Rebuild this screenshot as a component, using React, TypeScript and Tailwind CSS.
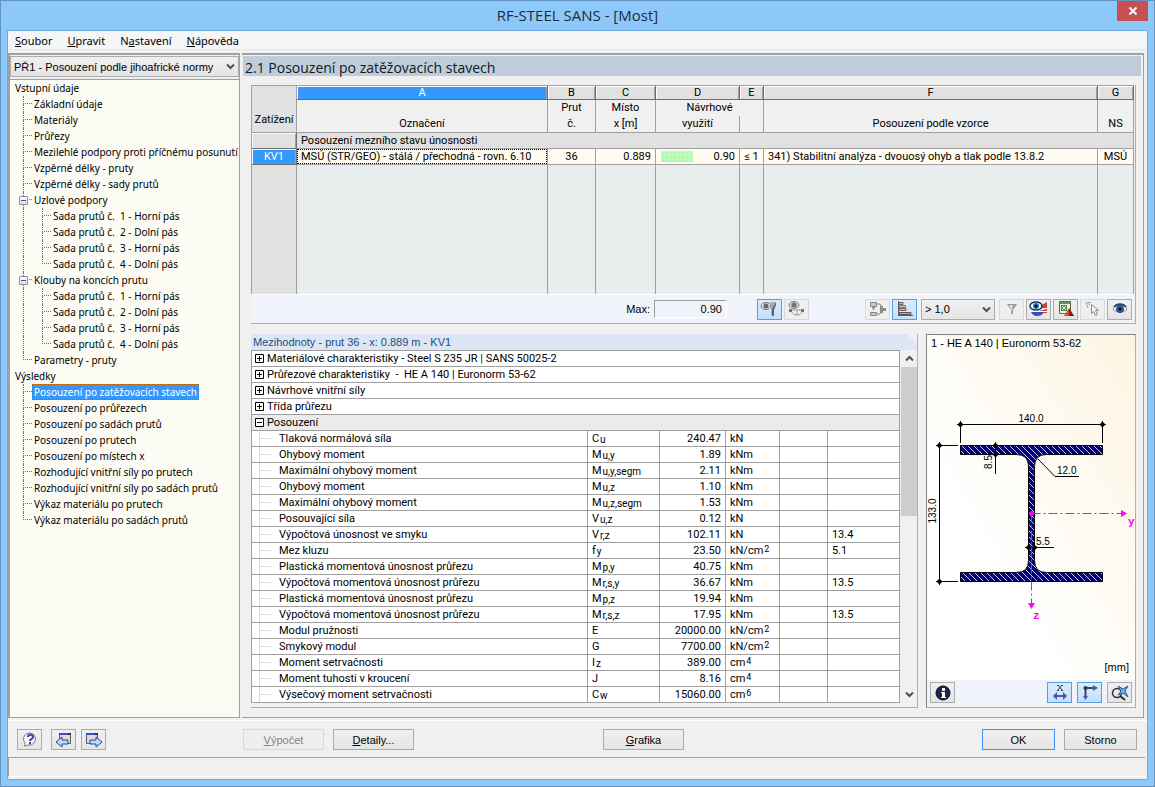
import { useState } from "react";
import type { ReactNode } from "react";
import clsx from "clsx";

type TreeNode = {
  id: string;
  label: string;
  children?: TreeNode[];
};

const members = (prefix: string): TreeNode[] => [
  { id: prefix + "1", label: "Sada prutů č.  1 - Horní pás" },
  { id: prefix + "2", label: "Sada prutů č.  2 - Dolní pás" },
  { id: prefix + "3", label: "Sada prutů č.  3 - Horní pás" },
  { id: prefix + "4", label: "Sada prutů č.  4 - Dolní pás" },
];

const tree: TreeNode[] = [
  {
    id: "input",
    label: "Vstupní údaje",
    children: [
      { id: "general", label: "Základní údaje" },
      { id: "materials", label: "Materiály" },
      { id: "sections", label: "Průřezy" },
      { id: "lateral", label: "Mezilehlé podpory proti příčnému posunutí" },
      { id: "lengths", label: "Vzpěrné délky - pruty" },
      { id: "lengthSets", label: "Vzpěrné délky - sady prutů" },
      { id: "supports", label: "Uzlové podpory", children: members("s") },
      { id: "hinges", label: "Klouby na koncích prutu", children: members("h") },
      { id: "params", label: "Parametry - pruty" },
    ],
  },
  {
    id: "results",
    label: "Výsledky",
    children: [
      { id: "byCase", label: "Posouzení po zatěžovacích stavech" },
      { id: "bySection", label: "Posouzení po průřezech" },
      { id: "bySet", label: "Posouzení po sadách prutů" },
      { id: "byMember", label: "Posouzení po prutech" },
      { id: "byX", label: "Posouzení po místech x" },
      { id: "forces", label: "Rozhodující vnitřní síly po prutech" },
      { id: "forceSets", label: "Rozhodující vnitřní síly po sadách prutů" },
      { id: "parts", label: "Výkaz materiálu po prutech" },
      { id: "partSets", label: "Výkaz materiálu po sadách prutů" },
    ],
  },
];

type Detail = {
  name: string;
  symbol: string;
  sub?: string;
  value: string;
  unit: string;
  power?: string;
  ref?: string;
};

const details: Detail[] = [
  { name: "Tlaková normálová síla", symbol: "C", sub: "u", value: "240.47", unit: "kN" },
  { name: "Ohybový moment", symbol: "M", sub: "u,y", value: "1.89", unit: "kNm" },
  { name: "Maximální ohybový moment", symbol: "M", sub: "u,y,segm", value: "2.11", unit: "kNm" },
  { name: "Ohybový moment", symbol: "M", sub: "u,z", value: "1.10", unit: "kNm" },
  { name: "Maximální ohybový moment", symbol: "M", sub: "u,z,segm", value: "1.53", unit: "kNm" },
  { name: "Posouvající síla", symbol: "V", sub: "u,z", value: "0.12", unit: "kN" },
  { name: "Výpočtová únosnost ve smyku", symbol: "V", sub: "r,z", value: "102.11", unit: "kN", ref: "13.4" },
  { name: "Mez kluzu", symbol: "f", sub: "y", value: "23.50", unit: "kN/cm", power: "2", ref: "5.1" },
  { name: "Plastická momentová únosnost průřezu", symbol: "M", sub: "p,y", value: "40.75", unit: "kNm" },
  { name: "Výpočtová momentová únosnost průřezu", symbol: "M", sub: "r,s,y", value: "36.67", unit: "kNm", ref: "13.5" },
  { name: "Plastická momentová únosnost průřezu", symbol: "M", sub: "p,z", value: "19.94", unit: "kNm" },
  { name: "Výpočtová momentová únosnost průřezu", symbol: "M", sub: "r,s,z", value: "17.95", unit: "kNm", ref: "13.5" },
  { name: "Modul pružnosti", symbol: "E", value: "20000.00", unit: "kN/cm", power: "2" },
  { name: "Smykový modul", symbol: "G", value: "7700.00", unit: "kN/cm", power: "2" },
  { name: "Moment setrvačnosti", symbol: "I", sub: "z", value: "389.00", unit: "cm", power: "4" },
  { name: "Moment tuhosti v kroucení", symbol: "J", value: "8.16", unit: "cm", power: "4" },
  { name: "Výsečový moment setrvačnosti", symbol: "C", sub: "w", value: "15060.00", unit: "cm", power: "6" },
];

const groups = [
  "Materiálové charakteristiky - Steel S 235 JR | SANS 50025-2",
  "Průřezové charakteristiky  -  HE A 140 | Euronorm 53-62",
  "Návrhové vnitřní síly",
  "Třída průřezu",
];

const menu = [
  ["", "S", "oubor"],
  ["", "U", "pravit"],
  ["N", "a", "stavení"],
  ["", "N", "ápověda"],
];

// ---- Small controls ----

function Chevron({ up = false }: { up?: boolean }) {
  return (
    <svg width="9" height="7" viewBox="0 0 9 7" fill="none" stroke="#505050" strokeWidth="2">
      <path d={up ? "M1 5.5 4.5 2 8 5.5" : "M1 1.5 4.5 5 8 1.5"} />
    </svg>
  );
}

type SelectProps = {
  label: string;
  options: string[];
  className: string;
};

function Select({ label, options, className }: SelectProps) {
  return (
    <div className={clsx("relative", className)}>
      <select
        aria-label={label}
        className="h-full w-full appearance-none border border-[#acacac] bg-linear-to-b from-[#f0f0f0] to-[#e5e5e5] pl-[3px] pr-5"
      >
        {options.map((o) => (
          <option key={o}>{o}</option>
        ))}
      </select>
      <span className="pointer-events-none absolute inset-y-0 right-1 flex items-center">
        <Chevron />
      </span>
    </div>
  );
}

type IconButtonProps = {
  label: string;
  active?: boolean;
  disabled?: boolean;
  children: ReactNode;
};

function IconButton({ label, active, disabled, children }: IconButtonProps) {
  return (
    <button
      aria-label={label}
      title={label}
      disabled={disabled}
      className={clsx(
        "flex h-[21px] w-[25px] shrink-0 items-center justify-center border",
        active
          ? "border-[#569de5] bg-linear-to-b from-[#daecfc] to-[#c4e0fc]"
          : disabled
            ? "border-[#d9d9d9] bg-[#efefef]"
            : "border-[#acacac] bg-linear-to-b from-[#f0f0f0] to-[#e5e5e5]",
      )}
    >
      <svg width="20" height="18" viewBox="0 0 20 18" fill="none">
        {children}
      </svg>
    </button>
  );
}

type PushButtonProps = {
  mnemonic: string;
  rest: string;
  className: string;
  disabled?: boolean;
};

function PushButton({ mnemonic, rest, className, disabled }: PushButtonProps) {
  return (
    <button
      disabled={disabled}
      className={clsx(
        "h-[21px] border",
        disabled
          ? "border-[#d9d9d9] bg-[#efefef] text-[#838383]"
          : "bg-linear-to-b from-[#f0f0f0] to-[#e5e5e5]",
        className,
      )}
    >
      <u>{mnemonic}</u>
      {rest}
    </button>
  );
}

// ---- Navigation tree ----

function Branch({ last }: { last: boolean }) {
  return (
    <span className="block h-4 w-[9px] shrink-0">
      <span className="block h-2 border-b border-l border-dotted border-[#707070]" />
      {!last && <span className="block h-2 border-l border-dotted border-[#707070]" />}
    </span>
  );
}

function Navigator() {
  const [selected, setSelected] = useState("byCase");
  const [closed, setClosed] = useState<string[]>([]);

  const toggle = (id: string) => {
    setClosed((prev) =>
      prev.includes(id) ? prev.filter((c) => c !== id) : [...prev, id],
    );
  };

  const renderLabel = (node: TreeNode) => (
    <button
      className={clsx(
        "h-4 whitespace-pre border border-dotted px-px leading-[14px]",
        selected === node.id
          ? "border-[#c06000] bg-[#3399ff] text-white"
          : "border-transparent",
      )}
      onClick={() => setSelected(node.id)}
    >
      {node.label}
    </button>
  );

  return (
    <nav className="grow border-t border-[#a0a0a0] bg-[#fcfbf3] font-['Noto_Sans',sans-serif] text-[10px]">
      <ul>
        {tree.map((root) => (
          <li key={root.id}>
            <div className="flex h-4 pl-[3px]">{renderLabel(root)}</div>
            <ul>
              {root.children?.map((node, i, all) => {
                const last = i === all.length - 1;
                const open = !closed.includes(node.id);

                return (
                  <li key={node.id}>
                    <div className="relative flex h-4 pl-[13px]">
                      <Branch last={last} />
                      {node.children && (
                        <button
                          aria-label={node.label}
                          aria-expanded={open}
                          className="absolute left-[9px] top-1 flex h-[9px] w-[9px] items-center justify-center rounded-[1px] border border-[#919191] bg-linear-to-b from-white to-[#dcdcdc]"
                          onClick={() => toggle(node.id)}
                        >
                          <span className="h-px w-[5px] bg-[#3c4cb0]" />
                        </button>
                      )}
                      {renderLabel(node)}
                    </div>
                    {node.children && open && (
                      <ul>
                        {node.children.map((leaf, j, leaves) => (
                          <li key={leaf.id} className="flex h-4 pl-[13px]">
                            <span className="w-[19px] shrink-0 border-l border-dotted border-[#707070]" />
                            <Branch last={j === leaves.length - 1} />
                            {renderLabel(leaf)}
                          </li>
                        ))}
                      </ul>
                    )}
                  </li>
                );
              })}
            </ul>
          </li>
        ))}
      </ul>
    </nav>
  );
}

// ---- Design results ----

function ResultsTable() {
  const cell = "border-b border-r border-[#a0a0a0]";
  const letter =
    "border-b border-r border-[#6e6e6e] font-normal shadow-[inset_1px_1px_0_#ffffff,inset_-1px_0_0_#a0a0a0]";

  return (
    <table className="w-full table-fixed border-separate border-spacing-0 border-l border-t border-[#a0a0a0] font-['Roboto',sans-serif] leading-[13px]">
      <colgroup>
        <col className="w-[45px]" />
        <col className="w-[251px]" />
        <col className="w-[48px]" />
        <col className="w-[60px]" />
        <col className="w-[84px]" />
        <col className="w-[24px]" />
        <col />
        <col className="w-[36px]" />
      </colgroup>
      <thead>
        <tr className="h-[14px]">
          <th
            rowSpan={2}
            className={clsx(cell, "bg-[#e1e1e1] pb-[6px] align-bottom font-normal")}
          >
            Zatížení
          </th>
          {["A", "B", "C", "D", "E", "F", "G"].map((l) => (
            <th
              key={l}
              className={clsx(letter, l === "A" ? "bg-[#3399ff] text-white" : "bg-[#e1e1e1]")}
            >
              {l}
            </th>
          ))}
        </tr>
        <tr className="h-[33px] bg-[#f0f0f0] leading-4">
          <th className={clsx(cell, "align-bottom font-normal")}>Označení</th>
          <th className={clsx(cell, "font-normal")}>
            Prut
            <br />
            č.
          </th>
          <th className={clsx(cell, "font-normal")}>
            Místo
            <br />x [m]
          </th>
          <th colSpan={2} className={clsx(cell, "font-normal")}>
            <div>Návrhové</div>
            <div className="flex">
              <span className="w-[84px] border-r border-[#a0a0a0]">využití</span>
            </div>
          </th>
          <th className={clsx(cell, "align-bottom font-normal")}>Posouzení podle vzorce</th>
          <th className={clsx(cell, "align-bottom font-normal")}>NS</th>
        </tr>
      </thead>
      <tbody>
        <tr className="h-4">
          <td className={clsx(letter, "bg-[#e1e1e1]")} />
          <td colSpan={7} className={clsx(cell, "bg-[#e1e1e1] pl-1")}>
            Posouzení mezního stavu únosnosti
          </td>
        </tr>
        <tr className="h-4 bg-[#fffbf0]">
          <td className={clsx(letter, "bg-[#3399ff] text-center text-white")}>KV1</td>
          <td className={cell}>
            <div className="h-[15px] whitespace-nowrap border border-dotted border-black pl-[3px]">
              MSÚ (STR/GEO) - stálá / přechodná - rovn. 6.10
            </div>
          </td>
          <td className={clsx(cell, "text-center")}>36</td>
          <td className={clsx(cell, "pr-1 text-right")}>0.889</td>
          <td className={clsx(cell, "pl-[5px] pr-1")}>
            <div className="flex items-center justify-between">
              <span className="h-[11px] w-8 bg-[#bbffb5] bg-[radial-gradient(#b2f2bc_1px,transparent_1px)] bg-[size:4px_4px]" />
              0.90
            </div>
          </td>
          <td className={clsx(cell, "text-center")}>≤ 1</td>
          <td className={clsx(cell, "whitespace-nowrap pl-1")}>
            341) Stabilitní analýza - dvouosý ohyb a tlak podle 13.8.2
          </td>
          <td className={clsx(cell, "text-center")}>MSÚ</td>
        </tr>
        <tr className="h-[129px] bg-[#e8eeee]">
          <td className="border-r border-[#a0a0a0] bg-[#e1e1e1]" />
          {[1, 2, 3, 4, 5, 6, 7].map((c) => (
            <td key={c} className="border-r border-[#a0a0a0]" />
          ))}
        </tr>
      </tbody>
    </table>
  );
}

function ResultsToolbar() {
  return (
    <div className="flex h-[29px] items-center justify-end gap-[2px] border-t border-white bg-[#f0f4fa] pr-[2px]">
      <label htmlFor="max" className="mr-[2px]">
        Max:
      </label>
      <input
        id="max"
        readOnly
        value="0.90"
        className="mr-[28px] h-[18px] w-[73px] border border-b-white border-l-[#a0a0a0] border-r-white border-t-[#a0a0a0] bg-[#f0f4fa] pr-1 text-right"
      />
      <IconButton label="Barevné škály" active>
        <path d="M10 2h6l-3 8v5h-2V9z" fill="#a5adb2" />
        <path d="M12 16V9l4-7v3l-2 5v6z" fill="#5f6468" />
        <ellipse cx="6" cy="6" rx="5" ry="3.500" fill="#d4d7da" stroke="#7b7f83" />
        <circle cx="6" cy="6" r="2.500" fill="#66696c" />
      </IconButton>
      <IconButton label="Průběhy výsledků" disabled>
        <ellipse cx="7" cy="5" rx="5" ry="3.500" fill="#cfcfcf" stroke="#858585" />
        <circle cx="7" cy="5" r="2.500" fill="#747474" />
        <path d="M3 10h14M4 11c2 3 3 4 6 4s4-1 6-4M10 10v5" stroke="#9a9a9a" />
        <path d="M2 9h3v3H2zM14 9h3v3h-3z" fill="#6f7868" />
      </IconButton>
      <span className="w-[52px]" />
      <IconButton label="Vazby" disabled>
        <path d="M2.500 2.500h6v4h-6zM2.500 12.500h6v3h-6z" fill="#c9c9c9" stroke="#858585" />
        <path d="M4 7h3l-1 3H5zM12 6h3v7h-3zM15 8h3v3h-3z" fill="#8c8c8c" />
        <path d="M9 4h3l1 2M9 14h3l1-2" stroke="#858585" />
      </IconButton>
      <IconButton label="Diagram" active>
        <path d="M3.500 1v15M3 15.500h15" stroke="#50606c" />
        <path d="M4 2.500h4v2H4zM4 8.500h7v2H4z" fill="#e6a9a3" stroke="#8a5b5b" />
        <path d="M4.500 5.500h6v2h-6z" fill="#b6dcb0" stroke="#6a8f68" />
        <path d="M4 12.500h12v2H4z" fill="#d09a96" stroke="#60504f" />
      </IconButton>
      <Select label="Filtr využití" options={["> 1,0", "Vše"]} className="mx-[2px] h-[21px] w-[74px]" />
      <IconButton label="Filtr" disabled>
        <path d="M5 4h10l-4 6v5l-2-2v-3z" fill="#999999" />
        <path d="M7 5h4l-1 5v3l-1-4z" fill="#dedede" />
      </IconButton>
      <IconButton label="Barvy výsledků">
        <path d="m11 6 7-4v6h-6zM10 11l8-2v4h-8z" fill="#cf3f3a" />
        <path d="M1 11h17v1H1z" fill="#ffffff" />
        <path d="M2 12h13c-2 3-4 4-7 4s-5-2-6-4z" fill="#2c50b4" />
        <ellipse cx="7" cy="6" rx="6" ry="4" fill="#ffffff" stroke="#123a6b" strokeWidth="1.500" />
        <circle cx="7" cy="6" r="3" fill="#2f78c8" />
        <circle cx="7" cy="6" r="1.500" fill="#000000" />
      </IconButton>
      <IconButton label="Export do Excelu">
        <path d="M3.500 1.500h11v12h-11z" fill="#f3f3e4" stroke="#5c6c50" />
        <path d="M4 2h10v2H4z" fill="#5f9a5f" />
        <path d="M5 5h6v6H5z" fill="#39944a" />
        <path d="m6 6 4 4M10 6l-4 4" stroke="#e4ffe4" />
        <path d="m13 8 5 8H8z" fill="#e04828" />
        <path d="M13 8v8h5z" fill="#8b1c18" />
      </IconButton>
      <IconButton label="Vybrat" disabled>
        <path d="M8.500 4.500v9l2-2 2 4 2-1-2-4h3z" fill="#f3f3f3" stroke="#8c8c8c" />
        <path d="m3 2 4 3M3 3l2 5M5 2l3 1" stroke="#a2a2a2" />
      </IconButton>
      <IconButton label="Zobrazit">
        <path d="M3 9c3-5 11-5 14 0-3 4-11 4-14 0z" fill="#ffffff" stroke="#7d8790" />
        <path d="M4 7c3-4 9-4 12 0" stroke="#2c3d50" strokeWidth="1.500" />
        <circle cx="10" cy="9" r="3.500" fill="#2c69b8" stroke="#173c72" />
        <circle cx="10" cy="9" r="1.500" fill="#000000" />
      </IconButton>
    </div>
  );
}

// ---- Intermediate values ----

function ExpandBox({ open = false }: { open?: boolean }) {
  return (
    <svg width="9" height="9" viewBox="0 0 9 9" fill="#ffffff" stroke="#000000">
      <path d="M.5.5h8v8h-8zM2 4.500h5" />
      {!open && <path d="M4.500 2v5" />}
    </svg>
  );
}

function DetailsTable() {
  const [open, setOpen] = useState(true);
  const cell = "border-b border-r border-[#a0a0a0] p-0";

  return (
    <table className="w-full table-fixed border-separate border-spacing-0 border-l border-t border-[#a0a0a0] bg-white font-['Roboto',sans-serif] leading-[15px]">
      <colgroup>
        <col />
        <col className="w-[72px]" />
        <col className="w-[66px]" />
        <col className="w-[54px]" />
        <col className="w-[48px]" />
        <col className="w-[72px]" />
      </colgroup>
      <tbody>
        {groups.map((g) => (
          <tr key={g} className="h-4">
            <td colSpan={6} className={cell}>
              <button className="flex h-[15px] items-center gap-[3px] whitespace-pre pl-[3px]">
                <ExpandBox />
                {g}
              </button>
            </td>
          </tr>
        ))}
        <tr className="h-4 bg-[#ebebeb]">
          <td colSpan={6} className={cell}>
            <button
              aria-expanded={open}
              className="flex h-[15px] items-center gap-[3px] pl-[3px]"
              onClick={() => setOpen(!open)}
            >
              <ExpandBox open={open} />
              Posouzení
            </button>
          </td>
        </tr>
        {open &&
          details.map((d, i) => (
            <tr key={i} className="h-4">
              <td className={cell}>
                <div className="flex h-[15px] items-center pl-[7px]">
                  <span className="h-full border-l border-[#dcdcdc]" />
                  <span className="mr-[8px] w-[11px] border-t border-[#dcdcdc]" />
                  {d.name}
                </div>
              </td>
              <td className={cell}>
                <div className="flex h-[15px] pl-1">
                  {d.symbol}
                  {d.sub && <span className="pl-px pt-px text-[10px]">{d.sub}</span>}
                </div>
              </td>
              <td className={clsx(cell, "text-right")}>
                <div className="h-[15px] pr-1">{d.value}</div>
              </td>
              <td className={cell}>
                <div className="flex h-[15px] pl-1">
                  {d.unit}
                  {d.power && <span className="pl-px text-[9px] leading-[12px]">{d.power}</span>}
                </div>
              </td>
              <td className={cell} />
              <td className={cell}>
                <div className="h-[15px] pl-1">{d.ref}</div>
              </td>
            </tr>
          ))}
      </tbody>
    </table>
  );
}

function DetailsPanel() {
  return (
    <section className="grow border-b border-r border-[#a9a8e6]">
      <h3 className="h-4 bg-[#dce6f5] pl-[2px] leading-4 text-[#1f4e79] [clip-path:polygon(0_0,calc(100%-10px)_0,100%_10px,100%_100%,0_100%)]">
        Mezihodnoty - prut 36 - x: 0.889 m - KV1
      </h3>
      <div className="flex gap-px bg-[#f0f0f0] pb-[4px]">
        <DetailsTable />
        <div className="flex w-4 shrink-0 flex-col bg-[#f0f0f0]">
          <button aria-label="Nahoru" className="flex h-[17px] items-center justify-center">
            <Chevron up />
          </button>
          <div className="h-[149px] bg-[#cdcdcd]" />
          <button aria-label="Dolů" className="mt-auto flex h-[17px] items-center justify-center">
            <Chevron />
          </button>
        </div>
      </div>
    </section>
  );
}

// ---- Cross-section ----

function SectionDrawing() {
  return (
    <svg
      width="208"
      height="230"
      viewBox="927 400 208 230"
      fill="none"
      stroke="#000000"
      className="font-['Liberation_Sans'] text-[10px]"
    >
      <defs>
        <pattern id="hatch" width="6" height="6" patternUnits="userSpaceOnUse">
          <rect width="6" height="6" fill="#000080" stroke="none" />
          <path d="M-1-1 7 7M-1 5l2 2M5-1l2 2" stroke="#c8c8f0" strokeWidth="1" />
        </pattern>
      </defs>
      <path
        d="M960.500 445.500h142v9h-56q-12 0-12 12v94q0 12 12 12h56v9h-142v-9h56q12 0 12-12v-94q0-12-12-12h-56z"
        fill="url(#hatch)"
      />
      <path d="M957 424.500h149M960.500 421v22M1102.500 421v22" />
      <path d="M939.500 442v143M936 445.500h22M936 581.500h22" />
      <path d="M995.500 442v32M992 445.500h7M992 454.500h7" />
      <path d="m1038 459 17 17.500h24M1025 547.500h29" />
      <g fill="#000000" stroke="none">
        <path d="m960.500 421.500 3 3-3 3-3-3zM1102.500 421.500l3 3-3 3-3-3zM939.500 442.500l3 3-3 3-3-3zM939.500 578.500l3 3-3 3-3-3z" />
        <path d="m995.500 442.500 3 3-3 3-3-3zM995.500 451.500l3 3-3 3-3-3zM1028.500 544.500l3 3-3 3-3-3zM1034.500 544.500l3 3-3 3-3-3z" />
        <text x="1031" y="422" textAnchor="middle">140.0</text>
        <text x="1057" y="474">12.0</text>
        <text x="1036" y="545">5.5</text>
        <text transform="translate(936 511) rotate(-90)" textAnchor="middle">133.0</text>
        <text transform="translate(992 462) rotate(-90)" textAnchor="middle">8.5</text>
      </g>
      <g stroke="#ff00ff" strokeDasharray="9 3 2 3">
        <path d="M1031.500 513.500h90M1031.500 513.500v90" />
      </g>
      <g fill="#ff00ff" stroke="none">
        <circle cx="1031.500" cy="513.500" r="2.500" />
        <path d="M1121 510v7l6-3.500zM1028 603h7l-3.500 6z" />
        <g className="font-['Liberation_Mono',monospace] text-[11px] font-bold">
          <text x="1128" y="525">y</text>
          <text x="1033" y="619">z</text>
        </g>
      </g>
    </svg>
  );
}

function SectionPanel() {
  return (
    <section className="flex w-[210px] shrink-0 flex-col border-b border-l border-r border-t border-b-[#a9a8e6] border-l-[#808080] border-r-[#a9a8e6] border-t-[#808080]">
      <div className="flex grow flex-col justify-between bg-linear-to-tr from-white from-30% to-[#fdf5e2]">
        <h3 className="mb-5 pl-1 pt-px">1 - HE A 140 | Euronorm 53-62</h3>
        <SectionDrawing />
        <p className="pb-[6px] pr-[6px] text-right">[mm]</p>
      </div>
      <div className="flex h-[27px] items-center gap-[5px] bg-[#f0f4fa] px-[3px] pb-[2px]">
        <IconButton label="Informace">
          <circle cx="10" cy="9" r="7" fill="#1c2450" stroke="#0c0c20" />
          <path d="M8 8h4v5h1v1H8v-1h1V9H8zM9 4h3v3H9z" fill="#ffffff" />
        </IconButton>
        <span className="grow" />
        <IconButton label="Kóty" active>
          <path d="m8 1 4 5M12 1 8 6M7 1.500h2M11 1.500h2M7 6.500h2M11 6.500h2" stroke="#404040" />
          <path d="m3 12 4-4v3h6V8l4 4-4 4v-3H7v3z" fill="#4a58a0" />
        </IconButton>
        <IconButton label="Osy" active>
          <path d="M5.500 4v9M5 4h10" stroke="#3a4868" strokeWidth="2" />
          <path d="m13 1 5 3-5 3zM3 12h5l-2.500 4z" fill="#4a58a0" />
          <circle cx="5.500" cy="4" r="2" fill="#303848" />
        </IconButton>
        <IconButton label="Výřez">
          <circle cx="7" cy="9" r="4.500" stroke="#303030" strokeWidth="1.500" />
          <path d="m10 12 5 4" stroke="#303030" strokeWidth="2" />
          <path d="m8 2 5 3 5-3-3 5 3 6-5-4-5 2 3-4z" fill="#6cb0f0" stroke="#26598f" />
        </IconButton>
      </div>
    </section>
  );
}

// ---- Window ----

export default function App() {
  return (
    <div className="flex min-h-screen flex-col border border-[#6593c0] bg-[#8dc8fb] px-[6px] pb-[6px] font-['Liberation_Sans',sans-serif] text-[11px] leading-[14px] text-black">
      <header className="grid h-[29px] grid-cols-[31px_1fr_31px] font-['Open_Sans',sans-serif]">
        <span />
        <h1 className="text-center text-[15px] leading-[29px] text-[#1e2c3a]">
          RF-STEEL SANS - [Most]
        </h1>
        <button aria-label="Zavřít" className="flex h-5 items-center justify-center bg-[#c75050]">
          <svg width="8" height="8" viewBox="0 0 8 8" stroke="#ffffff" strokeWidth="2">
            <path d="m.5.5 7 7M7.500.5l-7 7" />
          </svg>
        </button>
      </header>

      <div className="flex grow flex-col border border-[#74a9dc] bg-[#f0f0f0]">
        <nav className="flex h-[19px] items-center gap-[15px] border-b border-[#e8e8e8] bg-[#f5f6f7] pl-[7px] pt-[2px] font-['Noto_Sans',sans-serif] text-[11px]">
          {menu.map(([before, key, after]) => (
            <button key={key + after}>
              {before}
              <u>{key}</u>
              {after}
            </button>
          ))}
        </nav>

        <main className="flex grow gap-[2px] pr-[3px] pt-[3px]">
          <aside className="flex w-[232px] shrink-0 flex-col border-b border-l-2 border-r border-t-2 border-[#a0a0a0] pt-px">
            <Select
              label="Případ posouzení"
              options={["PŘ1 - Posouzení podle jihoafrické normy"]}
              className="mb-[2px] h-[21px]"
            />
            <Navigator />
          </aside>

          <div className="flex min-w-0 grow flex-col border-b border-r border-t-2 border-[#a0a0a0] pl-px pt-px">
            <h2 className="mr-[2px] h-5 bg-[#bfcddb] pl-[2px] font-['Open_Sans',sans-serif] text-[14px] leading-6 text-[#101820]">
              2.1 Posouzení po zatěžovacích stavech
            </h2>
            <div className="flex flex-col gap-[10px] pb-[9px] pl-2 pr-[7px] pt-[9px]">
              <section className="border-b border-r border-[#a9a8e6] pr-px">
                <ResultsTable />
                <ResultsToolbar />
              </section>
              <div className="flex gap-2">
                <DetailsPanel />
                <SectionPanel />
              </div>
            </div>
          </div>
        </main>

        <footer className="mt-[2px]">
          <div className="flex border-t border-white pb-[7px] pl-[9px] pr-[10px] pt-[8px]">
            <div className="flex w-[226px]">
              <IconButton label="Nápověda">
                <path d="M4 15c1-1 1-2 1-3A6 6 0 1 1 9 14c-2 0-3 1-5 1z" fill="#f3f3f7" stroke="#777b88" />
                <path d="M8 6c0-3 5-3 5 0 0 2-3 2-3 4" stroke="#3c46a0" strokeWidth="2" />
                <path d="M9 11h2v2H9z" fill="#3c46a0" />
              </IconButton>
              <span className="w-[9px]" />
              <IconButton label="Předchozí">
                <path d="M5.500 2.500h11v10h-11z" fill="#dcdcdc" stroke="#606060" />
                <path d="M5 2h9v2H5z" fill="#3550b8" />
                <path d="M14 2h3v2h-3z" fill="#303030" />
                <path d="m2 11 6-5v3h6v4H8v3z" fill="#b8dcff" stroke="#24429c" />
              </IconButton>
              <span className="w-[5px]" />
              <IconButton label="Další">
                <path d="M2.500 2.500h11v10h-11z" fill="#dcdcdc" stroke="#606060" />
                <path d="M2 2h9v2H2z" fill="#3550b8" />
                <path d="M11 2h3v2h-3z" fill="#303030" />
                <path d="m18 11-6-5v3H6v4h6v3z" fill="#b8dcff" stroke="#24429c" />
              </IconButton>
            </div>
            <PushButton mnemonic="V" rest="ýpočet" disabled className="w-[81px]" />
            <PushButton mnemonic="D" rest="etaily..." className="ml-[9px] w-[81px] border-[#acacac]" />
            <PushButton mnemonic="G" rest="rafika" className="ml-[189px] w-[81px] border-[#acacac]" />
            <PushButton mnemonic="" rest="OK" className="ml-auto w-[73px] border-[#3399ff]" />
            <PushButton mnemonic="" rest="Storno" className="ml-[9px] w-[73px] border-[#acacac]" />
          </div>
          <div className="mr-[2px] mb-[2px] h-5 border-b border-l border-t border-b-white border-l-[#a0a0a0] border-t-[#a0a0a0]" />
        </footer>
      </div>
    </div>
  );
}
